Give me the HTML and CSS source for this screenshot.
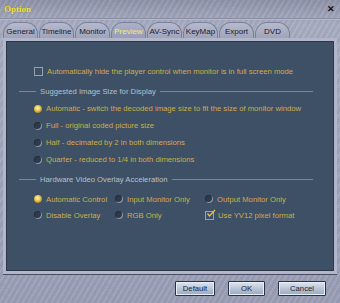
FILE: index.html
```html
<!DOCTYPE html>
<html lang="en">
<head>
    <meta charset="UTF-8">
    <title>Option</title>
    <link rel="stylesheet" href="styles.css">
</head>
<body>
    <div class="window">
        <div class="titlebar">
            <span class="title">Option</span>
            <span class="close">&#x2715;</span>
        </div>
        <div class="tabs">
            <div class="tab">General</div>
            <div class="tab">Timeline</div>
            <div class="tab">Monitor</div>
            <div class="tab active">Preview</div>
            <div class="tab">AV-Sync</div>
            <div class="tab">KeyMap</div>
            <div class="tab">Export</div>
            <div class="tab">DVD</div>
        </div>
        <div class="panel-frame">
            <div class="panel">
                <div class="row">
                    <span class="check"></span>
                    <span class="label">Automatically hide the player control when monitor is in full screen mode</span>
                </div>
                <div class="group-title">
                    <span class="rule short"></span>
                    <span class="group-text">Suggested Image Size for Display</span>
                    <span class="rule"></span>
                </div>
                <div class="row">
                    <span class="radio on"></span>
                    <span class="label">Automatic - switch the decoded image size to fit the size of monitor window</span>
                </div>
                <div class="row">
                    <span class="radio"></span>
                    <span class="label">Full - original coded picture size</span>
                </div>
                <div class="row">
                    <span class="radio"></span>
                    <span class="label">Half - decimated by 2 in both dimensions</span>
                </div>
                <div class="row">
                    <span class="radio"></span>
                    <span class="label">Quarter - reduced to 1/4 in both dimensions</span>
                </div>
                <div class="group-title second">
                    <span class="rule short"></span>
                    <span class="group-text">Hardware Video Overlay Acceleration</span>
                    <span class="rule"></span>
                </div>
                <div class="options">
                    <div class="row"><span class="radio on"></span><span class="label">Automatic Control</span></div>
                    <div class="row"><span class="radio"></span><span class="label">Input Monitor Only</span></div>
                    <div class="row"><span class="radio"></span><span class="label">Output Monitor Only</span></div>
                    <div class="row"><span class="radio"></span><span class="label">Disable Overlay</span></div>
                    <div class="row"><span class="radio"></span><span class="label">RGB Only</span></div>
                    <div class="row">
                        <span class="check checked">
                            <svg width="10" height="10" viewBox="0 0 10 10"><path d="M1.5 4.5 L3.5 7 L9 1" fill="none" stroke="#e2c25a" stroke-width="1.3"/></svg>
                        </span>
                        <span class="label">Use YV12 pixel format</span>
                    </div>
                </div>
            </div>
        </div>
        <div class="buttons">
            <button class="btn">Default</button>
            <button class="btn ok">OK</button>
            <button class="btn cancel">Cancel</button>
        </div>
    </div>
</body>
</html>
```

FILE: styles.css
```css
body {
    margin: 0;
    padding: 0;
    background: #9ea2b8;
    font-family: 'Liberation Sans', Arial, sans-serif;
}
.window {
    width: 340px;
    height: 303px;
    box-sizing: border-box;
    background:
        repeating-linear-gradient(120deg, rgba(255, 255, 255, 0.06) 0 2px, rgba(0, 0, 0, 0.03) 2px 5px),
        linear-gradient(180deg, #8f93aa 0%, #a8acc2 8%, #9a9eb6 100%);
    overflow: hidden;
}
.titlebar {
    height: 18px;
    display: flex;
    align-items: center;
    justify-content: space-between;
    padding: 0 5px 0 4px;
    border-bottom: 1px solid #8a8ea4;
    box-shadow: 0 1px 0 #b4b8cc;
}
.title {
    font-family: 'Liberation Serif', serif;
    font-weight: bold;
    font-size: 9px;
    color: #f4e640;
    text-shadow: 0 0 1px #6a6a40;
}
.close {
    font-size: 9px;
    font-weight: bold;
    color: #101018;
}
.tabs {
    display: flex;
    padding: 3px 0 0 3px;
    height: 16px;
}
.tab {
    width: 35px;
    margin-right: 1px;
    height: 16px;
    box-sizing: border-box;
    border: 1px solid #7c8098;
    border-bottom: none;
    border-radius: 12px 12px 0 0;
    background: linear-gradient(180deg, #b6bace, #a0a4ba);
    font-size: 8px;
    color: #1c2030;
    text-align: center;
    line-height: 18px;
    white-space: nowrap;
}
.tab.active {
    color: #f2ea6c;
    background: linear-gradient(180deg, #aeb2c8, #989cb4);
}
.panel-frame {
    margin: 0 3px;
    padding: 3px;
    background: #b2b6ca;
    border-bottom: 1px solid #4a4e60;
}
.panel {
    height: 230px;
    box-sizing: border-box;
    background: #3d5065;
    border: 1px solid #2c3848;
    padding: 21px 20px 0 27px;
    color: #d0ac48;
    font-size: 7.7px;
}
.row {
    height: 17px;
    display: flex;
    align-items: center;
    gap: 4px;
    white-space: nowrap;
}
.check {
    width: 7px;
    height: 7px;
    border: 1px solid #98a0ac;
    box-sizing: content-box;
    position: relative;
}
.check svg {
    position: absolute;
    left: 0;
    top: -3px;
}
.radio {
    width: 8px;
    height: 8px;
    border-radius: 50%;
    background: #2e3a4c;
    box-shadow: inset -1px -1px 0 #8a94a6, inset 1px 1px 0 #26303e;
}
.radio.on {
    background: radial-gradient(circle at 45% 40%, #fff4c0 0%, #f0d060 35%, #b08a28 70%, #3d5065 85%);
    box-shadow: none;
}
.group-title {
    height: 17px;
    display: flex;
    align-items: center;
    gap: 4px;
    margin-left: -15px;
    margin-top: 3px;
    color: #b8c0ca;
    font-size: 7.7px;
}
.rule {
    flex: 1;
    height: 1px;
    background: #7a8696;
}
.rule.short {
    flex: 0 0 17px;
}
.options {
    margin-top: 3px;
    display: grid;
    grid-template-columns: 81px 90px auto;
    grid-auto-rows: 16px;
}
.options .row {
    height: 16px;
}
.buttons {
    display: flex;
    justify-content: flex-end;
    gap: 13px;
    padding: 6px 14px 0 0;
}
.btn {
    width: 40px;
    height: 15px;
    padding: 0;
    border: 1px solid #2c3240;
    border-radius: 1px;
    background: linear-gradient(180deg, #dfe6f0 0%, #b8c6d8 50%, #98abc4 100%);
    box-shadow: inset 0 0 0 1px #e8eef6;
    font-family: 'Liberation Sans', Arial, sans-serif;
    font-size: 7.7px;
    color: #1a2030;
}
.btn.ok {
    width: 37px;
}
.btn.cancel {
    width: 48px;
}
```
